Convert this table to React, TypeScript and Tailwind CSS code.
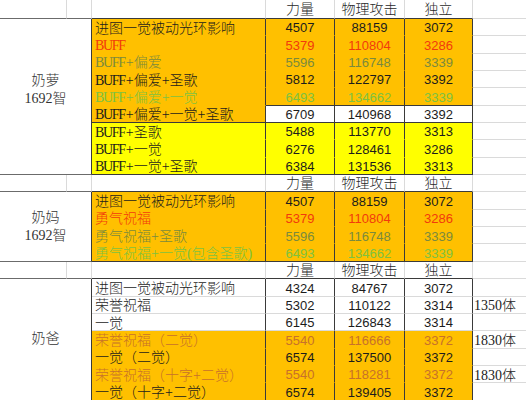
import type { ReactNode } from 'react';

const SERIF = "font-['Liberation_Serif','Noto_Sans_CJK_SC',serif] text-[14px]";
const SANS = "font-['Liberation_Sans','Noto_Sans_CJK_SC',sans-serif] text-[13px]";

// colours
const ORANGE = 'bg-[#ffc000]';
const YELLOW = 'bg-[#ffff00]';
const BLACK = 'text-[#1c1c1c]';
const RED = 'text-[#f23a0c]';
const OLIVE = 'text-[#7a8a3e]';
const GREEN = 'text-[#7cc242]';
const BROWN = 'text-[#c8712a]';

function Td({ children, className = '' }: { children?: ReactNode; className?: string }) {
  return (
    <div
      className={
        'flex items-center overflow-hidden whitespace-nowrap border-r border-b border-[#dadada] ' +
        className
      }
    >
      {children}
    </div>
  );
}

// the sheet font has half-width latin, so squeeze the letter runs a little
function Mixed({ text }: { text: string }) {
  const parts = text.split(/([A-Za-z]+)/).filter(Boolean);
  return (
    <span className="font-light">
      {parts.map((p, i) =>
        /^[A-Za-z]+$/.test(p) ? (
          <span key={i} className="tracking-[-1.3px] mr-[1px]">
            {p}
          </span>
        ) : (
          <span key={i}>{p}</span>
        )
      )}
    </span>
  );
}

type Row = {
  label: string;
  labelColor: string;
  nums: [string, string, string];
  numColor: string;
  cBg: string;
  cBottom: string;
  dBg: string;
  dBottom: string;
  side?: string;
};

function DataRow({ r }: { r: Row }) {
  return (
    <>
      <Td className={`${SERIF} ${r.cBg} ${r.labelColor} border-r-[#3a3a3a] ${r.cBottom} pl-[3px] pt-[2px]`}>
        <Mixed text={r.label} />
      </Td>
      {r.nums.map((n, i) => (
        <Td
          key={i}
          className={`${SANS} ${r.dBg} ${r.numColor} border-r-[#3a3a3a] ${r.dBottom} justify-center pt-[2px]`}
        >
          {n}
        </Td>
      ))}
      <Td className={`${SERIF} text-[#222] border-r-0 pl-[1px] pt-[2px]`}>
        {r.side && <Mixed text={r.side} />}
      </Td>
    </>
  );
}

function HeaderRow() {
  const ab = 'border-b-[#6b6b6b]';
  return (
    <>
      <Td className={ab} />
      <Td className={ab} />
      <Td className="border-b-[#3a3a3a]" />
      {['力量', '物理攻击', '独立'].map((h) => (
        <Td key={h} className={`${SERIF} font-light text-[#2a2a2a] justify-center border-b-[#3a3a3a] pt-[1px]`}>
          {h}
        </Td>
      ))}
      <Td className="border-r-0" />
    </>
  );
}

function Label({ lines, span, extra = '' }: { lines: string[]; span: string; extra?: string }) {
  return (
    <div
      className={`col-span-2 ${span} flex flex-col items-center justify-center border-r border-b border-r-[#3a3a3a] border-b-[#6b6b6b] ${SERIF} text-[#333] leading-[18px] ${extra}`}
    >
      {lines.map((l) => (
        <Mixed key={l} text={l} />
      ))}
    </div>
  );
}

const OB = 'border-b-[#ffc000]';
const YB = 'border-b-[#ffff00]';
const DB = 'border-b-[#3a3a3a]';
const LB = 'border-b-[#dadada]';

const nailuo: Row[] = [
  { label: '进图一觉被动光环影响', labelColor: BLACK, nums: ['4507', '88159', '3072'], numColor: BLACK, cBg: ORANGE, cBottom: OB, dBg: ORANGE, dBottom: OB },
  { label: 'BUFF', labelColor: RED, nums: ['5379', '110804', '3286'], numColor: RED, cBg: ORANGE, cBottom: OB, dBg: ORANGE, dBottom: OB },
  { label: 'BUFF+偏爱', labelColor: OLIVE, nums: ['5596', '116748', '3339'], numColor: OLIVE, cBg: ORANGE, cBottom: OB, dBg: ORANGE, dBottom: OB },
  { label: 'BUFF+偏爱+圣歌', labelColor: BLACK, nums: ['5812', '122797', '3392'], numColor: BLACK, cBg: ORANGE, cBottom: OB, dBg: ORANGE, dBottom: OB },
  { label: 'BUFF+偏爱+一觉', labelColor: GREEN, nums: ['6493', '134662', '3339'], numColor: GREEN, cBg: ORANGE, cBottom: OB, dBg: ORANGE, dBottom: DB },
  { label: 'BUFF+偏爱+一觉+圣歌', labelColor: BLACK, nums: ['6709', '140968', '3392'], numColor: BLACK, cBg: ORANGE, cBottom: DB, dBg: 'bg-white', dBottom: DB },
  { label: 'BUFF+圣歌', labelColor: BLACK, nums: ['5488', '113770', '3313'], numColor: BLACK, cBg: YELLOW, cBottom: YB, dBg: YELLOW, dBottom: YB },
  { label: 'BUFF+一觉', labelColor: BLACK, nums: ['6276', '128461', '3286'], numColor: BLACK, cBg: YELLOW, cBottom: YB, dBg: YELLOW, dBottom: YB },
  { label: 'BUFF+一觉+圣歌', labelColor: BLACK, nums: ['6384', '131536', '3313'], numColor: BLACK, cBg: YELLOW, cBottom: DB, dBg: YELLOW, dBottom: DB },
];

const naima: Row[] = [
  { label: '进图一觉被动光环影响', labelColor: BLACK, nums: ['4507', '88159', '3072'], numColor: BLACK, cBg: ORANGE, cBottom: OB, dBg: ORANGE, dBottom: OB },
  { label: '勇气祝福', labelColor: RED, nums: ['5379', '110804', '3286'], numColor: RED, cBg: ORANGE, cBottom: OB, dBg: ORANGE, dBottom: OB },
  { label: '勇气祝福+圣歌', labelColor: OLIVE, nums: ['5596', '116748', '3339'], numColor: OLIVE, cBg: ORANGE, cBottom: OB, dBg: ORANGE, dBottom: OB },
  { label: '勇气祝福+一觉(包含圣歌)', labelColor: GREEN, nums: ['6493', '134662', '3339'], numColor: GREEN, cBg: ORANGE, cBottom: DB, dBg: ORANGE, dBottom: DB },
];

const naiba: Row[] = [
  { label: '进图一觉被动光环影响', labelColor: BLACK, nums: ['4324', '84767', '3072'], numColor: BLACK, cBg: 'bg-white', cBottom: LB, dBg: 'bg-white', dBottom: LB },
  { label: '荣誉祝福', labelColor: BLACK, nums: ['5302', '110122', '3314'], numColor: BLACK, cBg: 'bg-white', cBottom: LB, dBg: 'bg-white', dBottom: LB, side: '1350体' },
  { label: '一觉', labelColor: BLACK, nums: ['6145', '126843', '3314'], numColor: BLACK, cBg: 'bg-white', cBottom: LB, dBg: 'bg-white', dBottom: LB },
  { label: '荣誉祝福（二觉）', labelColor: BROWN, nums: ['5540', '116666', '3372'], numColor: BROWN, cBg: ORANGE, cBottom: OB, dBg: ORANGE, dBottom: OB, side: '1830体' },
  { label: '一觉（二觉）', labelColor: BLACK, nums: ['6574', '137500', '3372'], numColor: BLACK, cBg: ORANGE, cBottom: OB, dBg: ORANGE, dBottom: OB },
  { label: '荣誉祝福（十字+二觉）', labelColor: BROWN, nums: ['5540', '118281', '3372'], numColor: BROWN, cBg: ORANGE, cBottom: OB, dBg: ORANGE, dBottom: OB, side: '1830体' },
  { label: '一觉（十字+二觉）', labelColor: BLACK, nums: ['6574', '139405', '3372'], numColor: BLACK, cBg: ORANGE, cBottom: OB, dBg: ORANGE, dBottom: OB },
];

export default function App() {
  return (
    <div className="w-[526px] h-[400px] overflow-hidden bg-white">
      <div className="grid grid-cols-[67px_25px_174px_69px_70px_68px_1fr] grid-rows-[19px_repeat(22,17.35px)]">
        <HeaderRow />
        <Label lines={['奶萝', '1692智']} span="row-span-9" extra="pb-[14px]" />
        {nailuo.map((r, i) => (
          <DataRow key={'a' + i} r={r} />
        ))}
        <HeaderRow />
        <Label lines={['奶妈', '1692智']} span="row-span-4" />
        {naima.map((r, i) => (
          <DataRow key={'b' + i} r={r} />
        ))}
        <HeaderRow />
        <Label lines={['奶爸']} span="row-span-7" />
        {naiba.map((r, i) => (
          <DataRow key={'c' + i} r={r} />
        ))}
      </div>
    </div>
  );
}
